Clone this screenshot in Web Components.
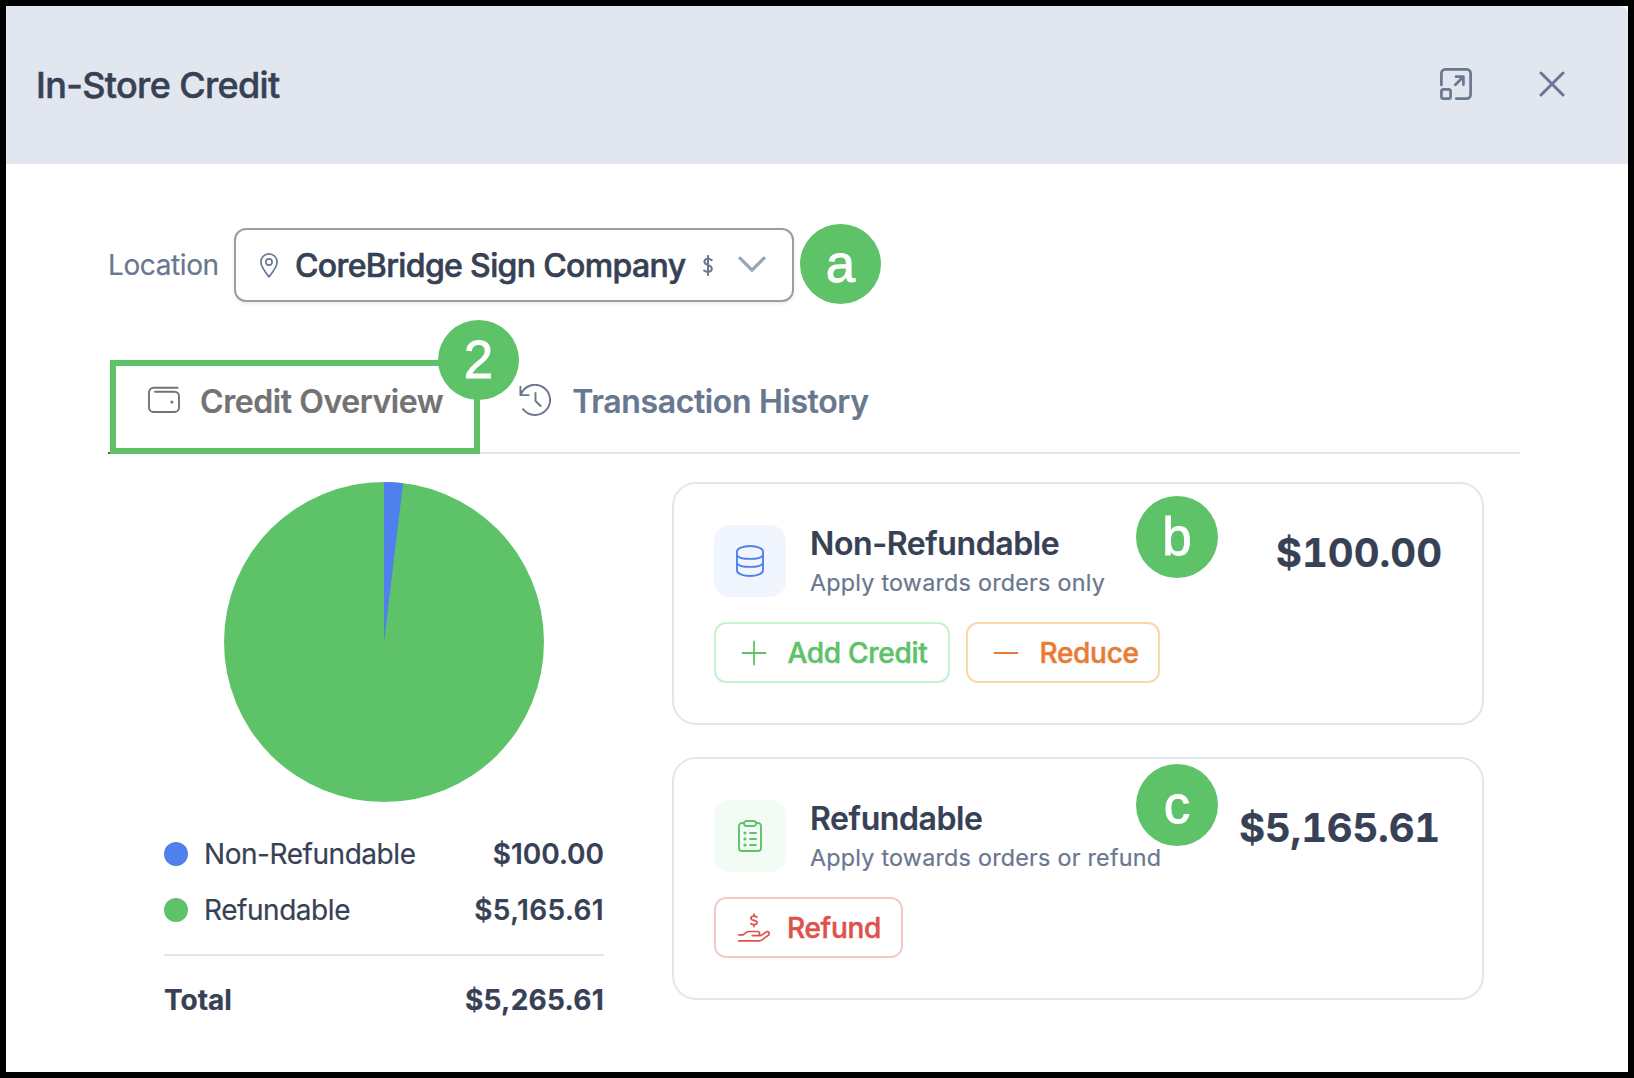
<!DOCTYPE html>
<html lang="en">
<head>
<meta charset="utf-8">
<title>In-Store Credit</title>
<style>
html,body{margin:0;padding:0}
body{width:1634px;height:1078px;overflow:hidden;background:#000;font-family:Inter,"Liberation Sans",sans-serif;color:#374155;-webkit-text-stroke-width:.2px}
</style>
</head>
<body>
<credit-dialog></credit-dialog>
<script>
const define = (name, html) => customElements.define(name, class extends HTMLElement {
  constructor() {
    super();
    const t = document.createElement('template');
    t.innerHTML = html;
    this.attachShadow({ mode: 'open' }).appendChild(t.content.cloneNode(true));
  }
});

const ICONS = {
  expand: [32, 32, '<g stroke-width="2.7"><path d="M1.4 17V5.4a4 4 0 0 1 4-4H26.6a4 4 0 0 1 4 4V26.6a4 4 0 0 1-4 4H16.2"/><rect x="1.4" y="21.4" width="9.2" height="9.2" rx="2.2"/><path d="M15.4 16.7L23.3 8.7M16 8.7h7.4v8"/></g>'],
  close: [26, 26, '<path stroke-width="3" d="M2 2L24 24M24 2L2 24"/>'],
  pin: [18, 25, '<g stroke-width="1.7"><path d="M9 23.9C6.2 20.4.9 13.4.9 9a8.1 8.1 0 0 1 16.2 0C17.1 13.4 11.8 20.4 9 23.9z"/><circle cx="9" cy="9" r="3.1"/></g>'],
  dollar: [10, 21, '<path stroke-width="2" d="M5 .9v19.2M8.7 5.2C7.5 4 6.2 3.8 5 3.8 2.8 3.8 1.4 5 1.4 6.8c0 2 1.7 2.7 3.7 3.3 2.2.6 3.7 1.400 3.700 3.500 0 2-1.500 3.300-3.800 3.300-1.400 0-2.800-.4-3.900-1.400"/>'],
  chevron: [28, 18, '<path stroke-width="3.3" d="M2 2.2L14 14.2L26 2.2"/>'],
  wallet: [32, 28, '<g stroke-width="1.9"><path d="M29.5 1.8H5.5a4.5 4.500 0 0 0-4.500 4.500V21.500a4.500 4.500 0 0 0 4.500 4.500H26.500a4.500 4.500 0 0 0 4.500-4.500V10.200a4.500 4.500 0 0 0-4.500-4.500H7"/></g><circle cx="23.900" cy="15.900" r="1.500" fill="currentColor" stroke="none"/>'],
  history: [33, 33, '<g stroke-width="1.9"><path d="M1.4 2.8v8.3h8.3M1.7 10.9A15.1 15.1 0 1 1 4 25.2"/><path d="M16.5 9v8l5.2 5"/></g>'],
  database: [28, 32, '<g stroke-width="1.9"><path d="M1 6.5C1 3.500 6.800 1 14 1S27 3.500 27 6.500V25.500C27 28.500 21.200 31 14 31S1 28.500 1 25.500z"/><path d="M1 10.200C2.200 12.300 7.600 13.900 14 13.900S25.800 12.300 27 10.200M1 18.200C2.200 20.300 7.600 21.900 14 21.900S25.800 20.300 27 18.200"/></g>'],
  clipboard: [24, 32, '<g stroke-width="1.9"><path d="M5.5 3H4a3 3 0 0 0-3 3V28a3 3 0 0 0 3 3H20a3 3 0 0 0 3-3V6a3 3 0 0 0-3-3h-1.5"/><path d="M8.5 1h7c1.5 0 2.5 1 2.5 2.5S17 6 15.5 6h-7C7 6 6 5 6 3.5S7 1 8.5 1z"/><path d="M12 13h6M12 19h6M12 25h6"/></g><g fill="currentColor" stroke="none"><circle cx="7" cy="13" r="1.6"/><circle cx="7" cy="19" r="1.6"/><circle cx="7" cy="25" r="1.6"/></g>'],
  plus: [26, 26, '<path stroke-width="1.8" d="M13 1.5v23M1.5 13h23"/>'],
  minus: [26, 26, '<path stroke-width="1.8" d="M1.5 13h23"/>'],
  hand: [32, 30, '<g stroke-width="1.7"><path d="M16 1v2.1M16 11.5v2.1M19 4.2C18 3.4 17 3.1 16 3.1c-1.9 0-3.1.8-3.1 2.1 0 1.5 1.5 1.8 3.1 2.2 1.7.4 3.1.9 3.1 2.3 0 1.3-1.2 1.9-3.1 1.9-1.2 0-2.2-.3-3.1-.9"/><path d="M.9 21.9H5.100L8 19.600a5.500 5.500 0 0 1 3.300-1.100H19.500a1.900 1.900 0 0 1 0 4.100H14.200M20.500 22.600H22.800L28.200 19.100c2.200-1.300 4.200 1.300 2.200 3L24.500 26.600a6 6 0 0 1-3.500 1.300H.9"/></g>']
};

customElements.define('line-icon', class extends HTMLElement {
  constructor() { super(); this.attachShadow({ mode: 'open' }); }
  connectedCallback() {
    const [w, h, body] = ICONS[this.getAttribute('name')];
    this.shadowRoot.innerHTML = `<style>:host{display:block;flex:none;width:${w}px;height:${h}px}svg{display:block}</style>
      <svg width="${w}" height="${h}" viewBox="0 0 ${w} ${h}" fill="none" stroke="currentColor" stroke-linecap="round" stroke-linejoin="round">${body}</svg>`;
  }
});

define('step-badge', `<style>
  :host{position:absolute;z-index:2;display:flex;align-items:center;justify-content:center;width:81px;height:80px;border-radius:50%;background:#5ec269;color:#fff;font:53px/80px "Liberation Sans",sans-serif;-webkit-text-stroke:.9px #fff}
</style><slot></slot>`);

define('dialog-header', `<style>
  :host{display:flex;align-items:center;height:158px;box-sizing:border-box;padding:0 63px 0 30px;background:#e2e7ef;border-top-right-radius:8px}
  h1{flex:1;margin:0;font-size:36px;font-weight:500;line-height:44px;letter-spacing:-.65px;-webkit-text-stroke-width:.5px}
  .tools{display:flex;align-items:center;gap:67px;color:#69778f;margin-top:-2px}
</style>
<h1><slot></slot></h1><div class="tools"><line-icon name="expand"></line-icon><line-icon name="close"></line-icon></div>`);

define('location-select', `<style>
  :host{position:relative;display:flex;align-items:center;width:686px;height:74px;color:#69778f}
  label{width:126px;font-size:28px;line-height:36px;letter-spacing:-.4px}
  .box{display:flex;align-items:center;width:560px;height:74px;box-sizing:border-box;border:2px solid #9d9d9d;border-radius:12px;padding:0 26px 0 24px;box-shadow:0 2px 4px rgba(0,0,0,.07)}
  b{margin-left:17px;flex:1;font-size:32px;font-weight:500;line-height:40px;padding-top:2px;color:#374155;white-space:nowrap;letter-spacing:-.64px;-webkit-text-stroke-width:.6px}
  .c{margin-left:25px;color:#97a4b9}
</style>
<label>Location</label>
<div class="box"><line-icon name="pin"></line-icon><b><slot></slot></b><line-icon name="dollar"></line-icon><line-icon class="c" name="chevron"></line-icon></div>
<step-badge style="left:692px;top:-4px">a</step-badge>`);

define('nav-tab', `<style>
  :host{display:flex;align-items:center;height:66px;color:#69778f;font-size:32px;font-weight:600;white-space:nowrap;letter-spacing:-.37px}
  :host([active]){color:#737373;letter-spacing:-.42px}
  span{line-height:40px;padding-top:4px}
</style><slot name="icon"></slot><span><slot></slot></span>`);

define('tab-strip', `<style>
  :host{position:relative;display:flex;height:94px;box-sizing:border-box;border-bottom:2px solid #e2e7ef;padding:7px 0 0 40px}
  .mark{position:absolute;left:2px;top:0;width:370px;height:94px;box-sizing:border-box;border:6px solid #5ec269}
  .tail{position:absolute;left:0;top:92px;width:2px;height:2px;background:#5a5a5a}
  .two{margin-left:76px}
</style>
<nav-tab active><line-icon slot="icon" name="wallet" style="margin-right:20px"></line-icon>Credit Overview</nav-tab>
<nav-tab class="two"><line-icon slot="icon" name="history" style="margin-right:20px"></line-icon>Transaction History</nav-tab>
<div class="mark"></div><div class="tail"></div>
<step-badge style="left:330px;top:-40px">2</step-badge>`);

define('credit-chart', `<style>
  :host{display:flex;flex-direction:column;align-items:center;width:440px}
  svg{display:block}
  .legend{align-self:stretch;margin-top:24px}
  .row{display:flex;align-items:center;height:56px;font-size:28px;line-height:36px}
  i{width:24px;height:24px;border-radius:50%;margin-right:16px}
  .row span{flex:1;letter-spacing:-.45px}
  .row b{font-weight:600}
  .wide b{letter-spacing:.4px}
  .total{border-top:2px solid #e2e7ef;margin-top:16px;padding-top:16px}
  .total span,.total b{font-weight:700}
  .total span{letter-spacing:0}
  .total b{letter-spacing:.25px}
</style>
<svg width="320" height="320" viewBox="0 0 320 320"><circle cx="160" cy="160" r="160" fill="#5ec269"/><path d="M160 160V0A160 160 0 0 1 179.060 1.140z" fill="#4f80ee"/></svg>
<div class="legend">
  <div class="row"><i style="background:#4f80ee"></i><span>Non-Refundable</span><b>$100.00</b></div>
  <div class="row wide"><i style="background:#5ec269"></i><span>Refundable</span><b>$5,165.61</b></div>
  <div class="row total"><span>Total</span><b>$5,265.61</b></div>
</div>`);

define('action-button', `<style>
  :host{display:flex;align-items:center;height:61px;box-sizing:border-box;border:2px solid;border-radius:12px;padding:0 20px 0 24.5px;font-size:28px;font-weight:500;line-height:36px;white-space:nowrap;letter-spacing:-.3px;-webkit-text-stroke-width:.5px}
  span{margin-left:21px}
  :host([kind=add]){border-color:#c3f3d0;color:#5ec269;width:236px}
  :host([kind=reduce]){border-color:#f8d7a9;color:#e97c35;width:194px}
  :host([kind=refund]){border-color:#f5c9c7;color:#de524c;width:189px;padding-left:21.5px}
  :host([kind=refund]) span{margin-left:17.5px}
</style><slot name="icon"></slot><span><slot></slot></span>`);

define('credit-card', `<style>
  :host{position:relative;display:block;width:812px;height:243px;box-sizing:border-box;border:2px solid #e2e7ef;border-radius:24px;padding:41px 40px 0}
  .top{display:flex;height:72px}
  .tile{display:flex;align-items:center;justify-content:center;width:72px;height:72px;border-radius:16px;background:var(--tile);color:var(--ink)}
  .txt{flex:1;margin-left:24px}
  .t{font-size:32px;font-weight:600;line-height:38px;letter-spacing:-.4px}
  .s{font-size:23.3px;line-height:32px;margin-top:4px;color:#69778f;white-space:nowrap;letter-spacing:.24px}
  .amt{font-size:40px;font-weight:700;line-height:56px;font-variant-numeric:tabular-nums;margin-right:var(--amt-inset,0);letter-spacing:var(--amt-track,0)}
  .actions{display:flex;gap:16px;margin-top:25px}
</style>
<div class="top"><div class="tile"><slot name="icon"></slot></div><div class="txt"><div class="t"><slot name="title"></slot></div><div class="s"><slot name="sub"></slot></div></div><div class="amt"><slot name="amount"></slot></div></div>
<div class="actions"><slot></slot></div><slot name="badge"></slot>`);

define('credit-dialog', `<style>
  :host{display:block;margin:6px;width:1622px;height:1066px;background:#fff}
  .body{padding:64px 108px 0 102px}
  tab-strip{margin-top:58px}
  .cols{display:flex;justify-content:space-between;padding:28px 36px 0 56px}
  .cards{display:flex;flex-direction:column;gap:32px}
</style>
<dialog-header>In-Store Credit</dialog-header>
<div class="body">
  <location-select>CoreBridge Sign Company</location-select>
  <tab-strip></tab-strip>
  <div class="cols">
    <credit-chart></credit-chart>
    <div class="cards">
      <credit-card style="--tile:#f0f5fe;--ink:#4f80ee">
        <line-icon slot="icon" name="database"></line-icon>
        <span slot="title">Non-Refundable</span><span slot="sub">Apply towards orders only</span><span slot="amount">$100.00</span>
        <action-button kind="add"><line-icon slot="icon" name="plus"></line-icon>Add Credit</action-button>
        <action-button kind="reduce"><line-icon slot="icon" name="minus"></line-icon>Reduce</action-button>
        <step-badge slot="badge" style="left:462px;top:12px;height:82px;width:82px">b</step-badge>
      </credit-card>
      <credit-card style="--tile:#f2fcf5;--ink:#5ec269;--amt-inset:2px;--amt-track:-.2px">
        <line-icon slot="icon" name="clipboard"></line-icon>
        <span slot="title">Refundable</span><span slot="sub">Apply towards orders or refund</span><span slot="amount">$5,165.61</span>
        <action-button kind="refund"><line-icon slot="icon" name="hand"></line-icon>Refund</action-button>
        <step-badge slot="badge" style="left:462px;top:5px;height:82px;width:82px">c</step-badge>
      </credit-card>
    </div>
  </div>
</div>`);
</script>
</body>
</html>
